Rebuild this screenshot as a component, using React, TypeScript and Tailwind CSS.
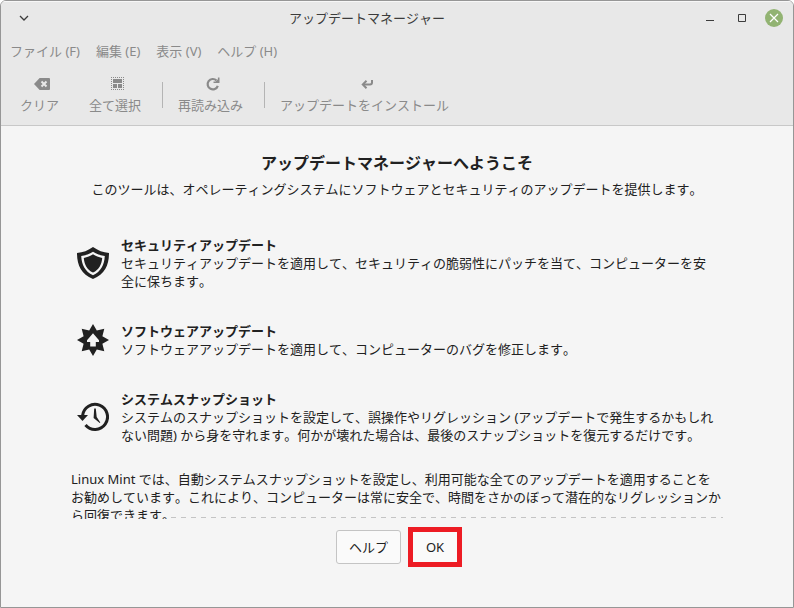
import type { ReactNode } from "react";

const MENUS = ["ファイル (F)", "編集 (E)", "表示 (V)", "ヘルプ (H)"];

type Feature = {
  title: string;
  lines: string[];
  icon: ReactNode;
};

function ClearIcon() {
  return (
    <svg viewBox="0 0 16 16" className="size-4" fill="none">
      <path d="M5.6 2H15a1 1 0 0 1 1 1v10a1 1 0 0 1-1 1H5.6L0 8z" fill="#8a8a8a" />
      <path d="M7.5 5.5l5 5m0-5l-5 5" stroke="#e8e8e8" strokeWidth="2" />
    </svg>
  );
}

function SelectAllIcon() {
  return (
    <svg viewBox="0 0 16 16" className="size-4" fill="none">
      <path d="M2 1.5h13M2 13.5h13M2.5 3v10M14.5 3v10" stroke="#8a8a8a" strokeDasharray="1 1" />
      <path d="M4 3h9v4H4zM4 8h4v4H4zM9 8h4v4H9z" fill="#8a8a8a" />
    </svg>
  );
}

function RefreshIcon() {
  return (
    <svg viewBox="0 0 16 16" className="size-4" fill="none">
      <path d="M11.5 4.5A5.2 5.2 0 1 0 12.8 9.8" stroke="#8a8a8a" strokeWidth="2.2" />
      <path d="M14.5 1.5V7H8.500V5.500h2.200L12.900 3.300V1.500z" fill="#8a8a8a" />
    </svg>
  );
}

function InstallIcon() {
  return (
    <svg viewBox="0 0 16 16" className="size-4" fill="none" stroke="#8a8a8a" strokeWidth="2">
      <path d="M13 4v2.5a2 2 0 0 1-2 2H4" />
      <path d="M7.5 4.800L3.800 8.500l3.700 3.700" />
    </svg>
  );
}

function ShieldIcon() {
  return (
    <svg viewBox="0 0 32 32" className="size-8 shrink-0">
      <path d="M16 0C11 3.5 6 5.5 0 6c0 12 4 21 16 26C28 27 32 18 32 6 26 5.500 21 3.500 16 0z" fill="#212121" />
      <path d="M16 4.800c-3.600 2.300-7.200 3.600-11.800 4.200C4.700 18 8 24.500 16 28.200 24 24.500 27.300 18 27.800 9 23.200 8.400 19.600 7.100 16 4.800z" fill="#f5f5f5" />
      <path d="M16 7.300c-2.700 1.700-5.600 2.900-9.200 3.600C7.400 17.500 10 22.500 16 25.500c6-3 8.600-8 9.200-14.600C21.600 10.200 18.700 9 16 7.300z" fill="#212121" />
    </svg>
  );
}

function SoftwareIcon() {
  return (
    <svg viewBox="0 0 32 32" className="size-8 shrink-0">
      <path
        d="M16 0l3.800 6.600L27.300 4.700 25.400 12.200 32 16l-6.600 3.800 1.900 7.500-7.500-1.900L16 32l-3.800-6.600-7.500 1.900 1.900-7.500L0 16l6.600-3.800L4.700 4.700l7.500 1.900z"
        fill="#212121"
      />
      <path d="M16 9.300l6 6.900V18h-3.200v4.500h-5.600V18H10v-1.800z" fill="#f5f5f5" />
    </svg>
  );
}

function SnapshotIcon() {
  return (
    <svg viewBox="0 0 32 32" className="size-8 shrink-0">
      <path d="M5.600 14.500A12.500 12.500 0 1 1 8.500 24" fill="none" stroke="#212121" strokeWidth="3" />
      <path d="M0 14h11L5.500 20z" fill="#212121" />
      <path d="M17.200 7.500h1.600l.9 8.500 3.600 5.500-.6.500L16.600 17z" fill="#212121" />
    </svg>
  );
}

const FEATURES: Feature[] = [
  {
    title: "セキュリティアップデート",
    lines: [
      "セキュリティアップデートを適用して、セキュリティの脆弱性にパッチを当て、コンピューターを安",
      "全に保ちます。",
    ],
    icon: <ShieldIcon />,
  },
  {
    title: "ソフトウェアアップデート",
    lines: ["ソフトウェアアップデートを適用して、コンピューターのバグを修正します。"],
    icon: <SoftwareIcon />,
  },
  {
    title: "システムスナップショット",
    lines: [
      "システムのスナップショットを設定して、誤操作やリグレッション (アップデートで発生するかもしれ",
      "ない問題) から身を守れます。何かが壊れた場合は、最後のスナップショットを復元するだけです。",
    ],
    icon: <SnapshotIcon />,
  },
];

function ToolButton({ label, icon }: { label: string; icon: ReactNode }) {
  return (
    <button className="flex flex-col items-center gap-1 px-[15px]">
      <span className="pl-1">{icon}</span>
      <span>{label}</span>
    </button>
  );
}

function Separator() {
  return <div className="ml-1.5 mt-1.5 h-[26px] w-px bg-[#b4b4b4]" />;
}

export default function App() {
  return (
    <div className="flex h-screen flex-col overflow-hidden rounded-t-md border border-[#969696] bg-[#f5f5f5] font-['Noto_Sans','Noto_Sans_CJK_JP',sans-serif] text-[13px] leading-[18px] text-[#212121] [font-kerning:none]">
      <header className="border-b border-[#c8c8c8] border-t border-t-[#f7f7f7] bg-[#e8e8e8] text-[#8a8a8a]">
        {/* Title bar */}
        <div className="grid h-8 grid-cols-[1fr_auto_1fr] items-center text-[#3c3c3c]">
          <button aria-label="メニュー" className="ml-[18px] justify-self-start">
            <svg viewBox="0 0 10 10" className="size-2.5" fill="none" stroke="currentColor" strokeWidth="1.3">
              <path d="M1 3l4 4 4-4" />
            </svg>
          </button>
          <h1 className="pr-[60px]">アップデートマネージャー</h1>
          <div className="mr-2.5 flex items-center gap-[22px] justify-self-end">
            <button aria-label="最小化">
              <svg viewBox="0 0 10 10" className="size-2.5" stroke="currentColor">
                <path d="M1 7.5h8" />
              </svg>
            </button>
            <button aria-label="最大化">
              <svg viewBox="0 0 10 10" className="size-2.5" fill="none" stroke="currentColor">
                <path d="M1.5 1.5h7v7h-7z" />
              </svg>
            </button>
            <button aria-label="閉じる" className="-ml-1 flex size-[18px] items-center justify-center rounded-full bg-[#92b372]">
              <svg viewBox="0 0 10 10" className="size-2.5" stroke="#fff" strokeWidth="1.2">
                <path d="M1 1l8 8m0-8l-8 8" />
              </svg>
            </button>
          </div>
        </div>

        {/* Menu bar */}
        <nav className="flex gap-4 px-[9px] py-2">
          {MENUS.map((m) => (
            <button key={m}>{m}</button>
          ))}
        </nav>

        {/* Toolbar */}
        <div className="flex items-start pb-[11px] pl-1 pt-2">
          <ToolButton label="クリア" icon={<ClearIcon />} />
          <ToolButton label="全て選択" icon={<SelectAllIcon />} />
          <Separator />
          <ToolButton label="再読み込み" icon={<RefreshIcon />} />
          <Separator />
          <ToolButton label="アップデートをインストール" icon={<InstallIcon />} />
        </div>
      </header>

      <main className="relative min-h-0 flex-1 overflow-hidden px-[70px] pt-[25px]">
        <h2 className="text-center text-base font-bold">アップデートマネージャーへようこそ</h2>
        <p className="mt-[5px] text-center">このツールは、オペレーティングシステムにソフトウェアとセキュリティのアップデートを提供します。</p>

        <div className="mt-[38px] flex flex-col gap-8 pl-1.5">
          {FEATURES.map((f) => (
            <section key={f.title} className="flex items-center gap-3">
              {f.icon}
              <div className="whitespace-nowrap">
                <h3 className="font-bold">{f.title}</h3>
                {f.lines.map((line) => (
                  <p key={line}>{line}</p>
                ))}
              </div>
            </section>
          ))}
        </div>

        <p className="mt-[26px] whitespace-nowrap">
          Linux Mint では、自動システムスナップショットを設定し、利用可能な全てのアップデートを適用することを
          <br />
          お勧めしています。これにより、コンピューターは常に安全で、時間をさかのぼって潜在的なリグレッションか
          <br />
          ら回復できます。
        </p>

        {/* Overflow hint at the bottom of the scrolled area */}
        <div className="absolute bottom-px left-[170px] right-[70px] h-px bg-[repeating-linear-gradient(90deg,#c4c4c4_0_5px,transparent_5px_10px)]" />
      </main>

      <footer className="flex items-center justify-center gap-[7px] pb-10 pl-1 pt-2">
        <button className="h-[34px] w-[65px] rounded-[3px] border border-[#c4c4c4] bg-[#fafafa]">ヘルプ</button>
        <button className="h-10 w-[54px] border-5 border-[#ed1c24] bg-[#fafafa]">OK</button>
      </footer>
    </div>
  );
}
